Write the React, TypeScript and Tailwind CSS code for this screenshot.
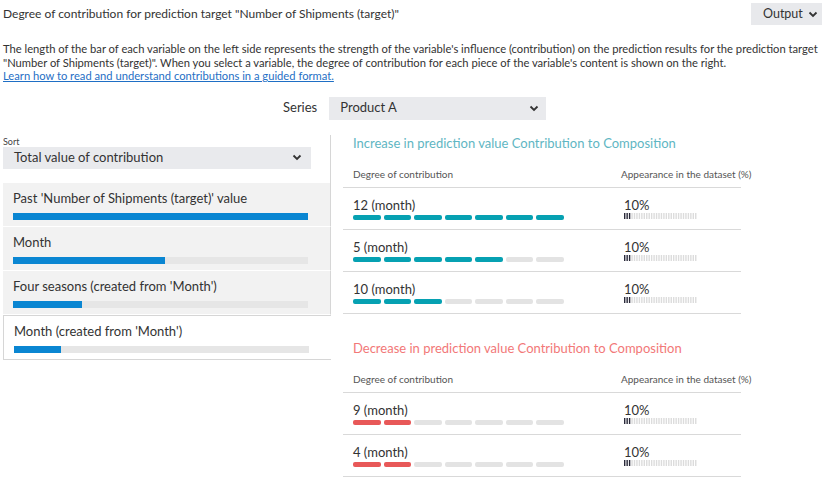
import React from 'react';

const FONT = "font-['Lato','Liberation_Sans',sans-serif]";

interface Variable {
  name: string;
  pct: number;
}

interface Part {
  label: string;
  filled: number;
  share: number;
}

const variables: Variable[] = [
  { name: "Past 'Number of Shipments (target)' value", pct: 100 },
  { name: 'Month', pct: 51.5 },
  { name: "Four seasons (created from 'Month')", pct: 23.5 },
  { name: "Month (created from 'Month')", pct: 16 },
];

const increase: Part[] = [
  { label: '12 (month)', filled: 7, share: 3 },
  { label: '5 (month)', filled: 5, share: 3 },
  { label: '10 (month)', filled: 3, share: 3 },
];

const decrease: Part[] = [
  { label: '9 (month)', filled: 2, share: 3 },
  { label: '4 (month)', filled: 2, share: 3 },
];

function Chevron() {
  return (
    <svg width="10" height="7" viewBox="0 0 10 7" className="shrink-0">
      <polyline points="1.5,1.5 5,5 8.5,1.5" fill="none" stroke="#333" strokeWidth="1.8" />
    </svg>
  );
}

function Ticks({ on }: { on: number }) {
  return (
    <svg width="74" height="6" viewBox="0 0 74 6">
      {Array.from({ length: 30 }).map((_, i) => (
        <rect key={i} x={i * 2.45} y={0} width={1.4} height={6} fill={i < on ? '#2a2a3a' : '#dcdcdc'} />
      ))}
    </svg>
  );
}

function PartRow({ part, color }: { part: Part; color: string }) {
  return (
    <div className="flex h-[42px] border-b border-[#d9d9d9]">
      <div className="w-[281px] shrink-0 pl-[10px] pt-[9px]">
        <div className="text-[13px] leading-4 text-[#333]">{part.label}</div>
        <div className="mt-[2px] flex gap-[3px]">
          {Array.from({ length: 7 }).map((_, i) => (
            <div
              key={i}
              className="h-[5px] w-[27.5px] rounded-[2px]"
              style={{ background: i < part.filled ? color : '#e3e3e3' }}
            />
          ))}
        </div>
      </div>
      <div className="pt-[9px]">
        <div className="text-[13px] leading-4 text-[#333]">10%</div>
        <Ticks on={part.share} />
      </div>
    </div>
  );
}

function Section({ title, titleColor, color, parts }: { title: string; titleColor: string; color: string; parts: Part[] }) {
  return (
    <div>
      <div className="pl-[10px] text-[13px] leading-4" style={{ color: titleColor }}>
        {title}
      </div>
      <div className="mt-[15px] flex h-[22px] whitespace-nowrap border-b border-[#d9d9d9] text-[10px] leading-4 text-[#555]">
        <div className="w-[278px] shrink-0 pl-[10px]">Degree of contribution</div>
        <div>Appearance in the dataset (%)</div>
      </div>
      {parts.map((p) => (
        <PartRow key={p.label} part={p} color={color} />
      ))}
    </div>
  );
}

export default function App() {
  return (
    <div className={`${FONT} h-[480px] w-[826px] overflow-hidden bg-white text-[#333]`}>
      <div className="flex items-center justify-between pl-[3px] pr-[4px] pt-[3px]">
        <div className="text-[12px]">Degree of contribution for prediction target "Number of Shipments (target)"</div>
        <button className="flex h-[22px] w-[71px] items-center gap-[5px] bg-[#e8e9ec] pl-[12px] pr-[8px] text-[12.5px] text-[#333]">
          Output
          <Chevron />
        </button>
      </div>

      <div className="mt-[17px] pl-[3px] pr-[2px] text-[11.2px] leading-[13.5px]">
        <p>
          The length of the bar of each variable on the left side represents the strength of the variable's influence
          (contribution) on the prediction results for the prediction target "Number of Shipments (target)". When you
          select a variable, the degree of contribution for each piece of the variable's content is shown on the right.
        </p>
        <a className="text-[#1f6fc5] underline">Learn how to read and understand contributions in a guided format.</a>
      </div>

      <div className="mt-[14px] flex items-center gap-[12px] pl-[283px]">
        <span className="text-[13px]">Series</span>
        <div className="flex h-[23px] w-[217px] items-center justify-between bg-[#e9eaed] pl-[11px] pr-[7px] text-[13px]">
          Product A
          <Chevron />
        </div>
      </div>

      <div className="mt-[15px] flex">
        <div className="w-[331px] shrink-0">
          <div className="border-r border-[#d6d6d6] pl-[3px] pr-[19px] pt-[2px] pb-[14px]">
            <div className="text-[9px] leading-[10px] text-[#444]">Sort</div>
            <div className="flex h-[22px] items-center justify-between bg-[#e9eaed] pl-[11px] pr-[9px] text-[13px]">
              Total value of contribution
              <Chevron />
            </div>
          </div>
          {variables.map((v, i) => {
            const selected = i === 3;
            return (
              <div
                key={v.name}
                className={
                  selected
                    ? 'ml-[3px] h-[45px] border border-r-0 border-[#d6d6d6] bg-white pl-[10px] pt-[5px]'
                    : 'ml-[3px] h-[44px] border-b border-r border-b-white border-r-[#d6d6d6] bg-[#f2f2f2] pl-[10px] pt-[5px]'
                }
              >
                <div className="text-[13px] leading-5">{v.name}</div>
                <div className="mt-[5px] h-[7px] w-[295px] bg-[#e6e6e6]">
                  <div className="h-full bg-[#0a86d2]" style={{ width: `${v.pct}%` }} />
                </div>
              </div>
            );
          })}
        </div>

        <div className="ml-[12px] w-[398px]">
          <Section
            title="Increase in prediction value Contribution to Composition"
            titleColor="#5fb6c3"
            color="#06a1b2"
            parts={increase}
          />
          <div className="h-[26px]" />
          <Section
            title="Decrease in prediction value Contribution to Composition"
            titleColor="#f27878"
            color="#e85858"
            parts={decrease}
          />
        </div>
      </div>
    </div>
  );
}
